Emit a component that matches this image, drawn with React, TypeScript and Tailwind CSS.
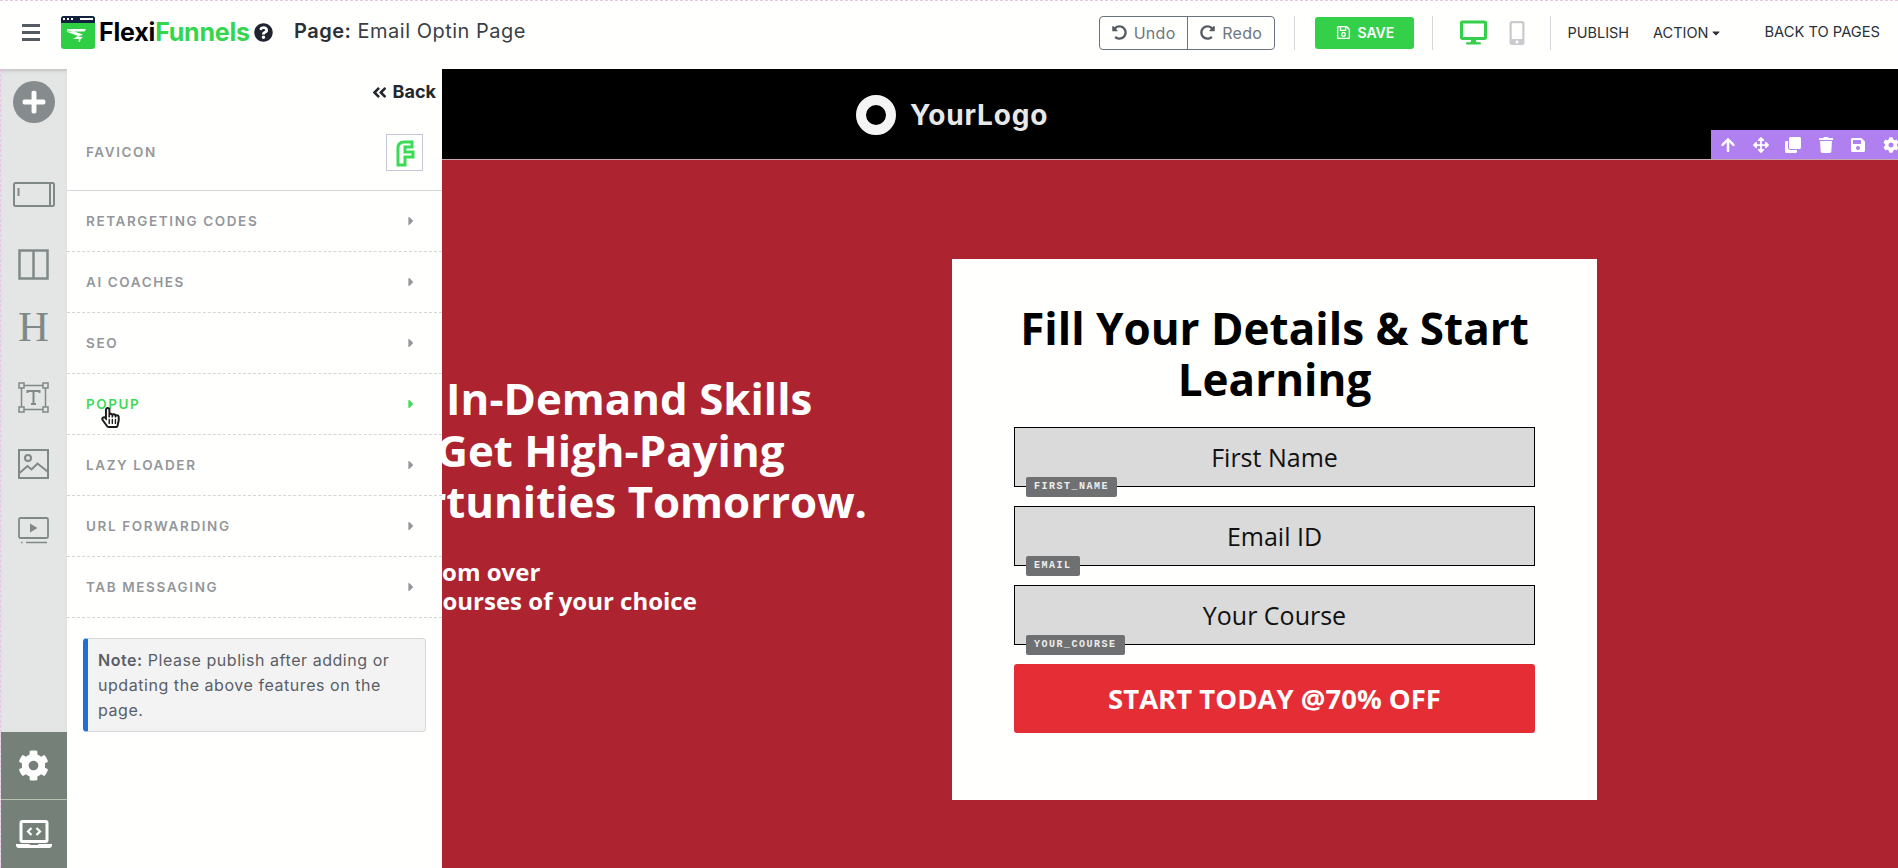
import {
  FaAngleDoubleLeft,
  FaArrowUp,
  FaArrowsAlt,
  FaCaretDown,
  FaCaretRight,
  FaClone,
  FaCog,
  FaDesktop,
  FaMobileAlt,
  FaPlus,
  FaQuestionCircle,
  FaRedoAlt,
  FaRegHandPointer,
  FaRegSave,
  FaSave,
  FaTrash,
  FaUndoAlt,
} from "react-icons/fa";

const poppins = "font-['Inter','Liberation_Sans',sans-serif]";
const openSans = "font-['Open_Sans','Liberation_Sans',sans-serif]";

const menuItems = [
  "RETARGETING CODES",
  "AI COACHES",
  "SEO",
  "POPUP",
  "LAZY LOADER",
  "URL FORWARDING",
  "TAB MESSAGING",
];

const fields = [
  { placeholder: "First Name", tag: "FIRST_NAME" },
  { placeholder: "Email ID", tag: "EMAIL" },
  { placeholder: "Your Course", tag: "YOUR_COURSE" },
];

function FlexiLogo() {
  return (
    <svg viewBox="0 0 34 33" className="h-[33px] w-[34px] shrink-0">
      <rect x="0" y="0" width="34" height="33" rx="3" fill="#2fcf45" />
      <path d="M0 3a3 3 0 0 1 3-3h28a3 3 0 0 1 3 3v4H0z" fill="#13213f" />
      <rect x="2" y="2" width="2" height="2" fill="#fff" />
      <rect x="6" y="2" width="2" height="2" fill="#fff" />
      <rect x="10" y="2" width="2" height="2" fill="#fff" />
      <rect x="19" y="2" width="13" height="2" fill="#fff" />
      <path
        d="M6 13h19l-1.500 2.500H13l9 3-5 2.500h5l-2.500 2-.5 3h-1.500l.5-3h-6l5-3-12-4.500h8l-7-1z"
        fill="#fff"
      />
    </svg>
  );
}

function SectionIcon() {
  return (
    <svg viewBox="0 0 42 25" className="h-[25px] w-[42px]" fill="none" stroke="#7f8a88" strokeWidth="2">
      <rect x="1" y="1" width="40" height="23" rx="1.500" />
      <path d="M5.500 6v8M37 1v23" />
    </svg>
  );
}

function ColumnsIcon() {
  return (
    <svg viewBox="0 0 31 31" className="h-[31px] w-[31px]" fill="none" stroke="#7f8a88" strokeWidth="2.500">
      <rect x="1.500" y="1.500" width="28" height="28" />
      <path d="M15.500 1.500v28" />
    </svg>
  );
}

function TextBoxIcon() {
  return (
    <svg viewBox="0 0 31 31" className="h-[31px] w-[31px]" fill="none" stroke="#7f8a88" strokeWidth="1.500">
      <rect x="3.500" y="3.500" width="24" height="24" />
      <rect x="1" y="1" width="5" height="5" fill="#e4e5e5" />
      <rect x="25" y="1" width="5" height="5" fill="#e4e5e5" />
      <rect x="1" y="25" width="5" height="5" fill="#e4e5e5" />
      <rect x="25" y="25" width="5" height="5" fill="#e4e5e5" />
      <path d="M9.500 11V9h12v2M15.500 9v13M13 22h5" strokeWidth="2" />
    </svg>
  );
}

function ImageIcon() {
  return (
    <svg viewBox="0 0 31 30" className="h-[30px] w-[31px]" fill="none" stroke="#7f8a88" strokeWidth="2">
      <rect x="1" y="1" width="29" height="28" />
      <circle cx="10" cy="9" r="3" />
      <path d="M1.500 24l8-7 4 3.500 6-6 10 8" />
    </svg>
  );
}

function VideoIcon() {
  return (
    <svg viewBox="0 0 31 27" className="h-[27px] w-[31px]" fill="none" stroke="#7f8a88" strokeWidth="1.800">
      <rect x="1" y="1" width="29" height="20" rx="1.500" />
      <path d="M12 6.500l7.500 4.500-7.500 4.500z" fill="#7f8a88" stroke="none" />
      <path d="M3 25.500h1.500M8 25.500h21" strokeWidth="1.500" />
    </svg>
  );
}

function LaptopCodeIcon() {
  return (
    <svg viewBox="0 0 36 28" className="h-[28px] w-[36px]" fill="none">
      <rect x="5" y="1.500" width="26" height="20" rx="1.500" stroke="#fff" strokeWidth="3" />
      <path d="M15.500 8l-3.500 3.500 3.500 3.500M20.500 8l3.500 3.500-3.500 3.500" stroke="#fff" strokeWidth="2.200" />
      <path d="M0 24h13l1.500 1h7l1.500-1h13v1a3 3 0 0 1-3 3H3a3 3 0 0 1-3-3z" fill="#fff" />
    </svg>
  );
}

function TopBar() {
  return (
    <header className="flex h-[69px] shrink-0 items-center border-t border-dashed border-[#e7c6e4] bg-[#fffffd] pb-[5px] text-[#2b3038]">
      <div className="ml-[22px] flex w-[18px] flex-col gap-[4px]">
        <span className="h-[3px] bg-[#555b63]" />
        <span className="h-[3px] bg-[#555b63]" />
        <span className="h-[3px] bg-[#555b63]" />
      </div>
      <div className="ml-[21px]">
        <FlexiLogo />
      </div>
      <span className={`ml-[4px] w-[150px] text-[25px] leading-none font-bold tracking-[-0.2px] ${poppins}`}>
        <span className="text-black">Flexi</span>
        <span className="text-[#35d64d]">Funnels</span>
      </span>
      <FaQuestionCircle className="ml-[5px] text-[19px] text-[#1f2430]" />
      <span className={`-mt-[3px] ml-[21px] text-[20px] tracking-[0.500px] ${poppins}`}>
        <span className="font-semibold">Page:</span> <span className="text-[#3a3f47]">Email Optin Page</span>
      </span>

      <div className={`ml-auto flex h-[34px] w-[176px] rounded-[4px] border border-[#6b7280] text-[16px] tracking-[0.300px] text-[#6f757d] ${poppins}`}>
        <span className="flex flex-1 items-center justify-center gap-[7px] border-r border-[#6b7280]">
          <FaUndoAlt className="text-[15px] text-[#555b63]" /> Undo
        </span>
        <span className="flex flex-1 items-center justify-center gap-[7px]">
          <FaRedoAlt className="text-[15px] text-[#555b63]" /> Redo
        </span>
      </div>
      <span className="ml-[19px] h-[34px] w-px bg-[#d5d7da]" />
      <button className={`ml-[20px] flex h-[32px] w-[99px] items-center justify-center gap-[7px] rounded-[3px] bg-[#35d04a] text-[14px] font-semibold text-white ${poppins}`}>
        <FaRegSave className="text-[15px]" /> SAVE
      </button>
      <span className="ml-[18px] h-[34px] w-px bg-[#d5d7da]" />
      <FaDesktop className="ml-[27px] text-[27px] text-[#35cf4b]" />
      <FaMobileAlt className="ml-[18px] text-[24px] text-[#c9cbce]" />
      <span className="ml-[21px] h-[34px] w-px bg-[#d5d7da]" />
      <span className={`ml-[16px] text-[14.500px] ${poppins}`}>PUBLISH</span>
      <span className={`ml-[24px] flex items-center gap-[2px] text-[14.500px] ${poppins}`}>
        ACTION <FaCaretDown className="text-[12px]" />
      </span>
      <span className={`mr-[18px] ml-[42px] text-[14.700px] ${poppins}`}>BACK TO PAGES</span>
    </header>
  );
}

function IconRail() {
  return (
    <aside className="flex w-[67px] shrink-0 flex-col items-stretch border-l border-dashed border-[#e7c6e4] bg-[#e4e5e5] shadow-[inset_0_4px_4px_-3px_#b5b5b5]">
      <div className="mt-[12px] flex flex-col items-center pr-[1px]">
        <span className="flex h-[42px] w-[42px] items-center justify-center rounded-full bg-[#868b8d]">
          <FaPlus className="text-[26px] text-white" />
        </span>
        <div className="mt-[59px]">
          <SectionIcon />
        </div>
        <div className="mt-[42px]">
          <ColumnsIcon />
        </div>
        <span className="mt-[32px] h-[30px] font-['Liberation_Serif',serif] text-[43px] leading-[30px] text-[#7f8a88]">H</span>
        <div className="mt-[40px]">
          <TextBoxIcon />
        </div>
        <div className="mt-[36px]">
          <ImageIcon />
        </div>
        <div className="mt-[38px]">
          <VideoIcon />
        </div>
      </div>
      <div className="relative mt-auto flex h-[68px] items-center justify-center border-b border-[#b9c2ad] bg-[#758079] pr-[1px]">
        <FaCog className="text-[31px] text-white" />
        <span className="absolute top-[22px] left-[66px] h-0 w-0 border-y-[13px] border-l-[14px] border-y-transparent border-l-[#758079]" />
      </div>
      <div className="flex h-[68px] items-center justify-center bg-[#758079] pr-[1px]">
        <LaptopCodeIcon />
      </div>
    </aside>
  );
}

function SettingsPanel() {
  return (
    <aside className={`relative z-10 flex w-[375px] shrink-0 flex-col bg-[#fffffd] ${poppins}`}>
      <div className="flex h-[46px] items-start justify-end pt-[9px] pr-[6px] text-[18px] font-bold text-[#24272c]">
        <span className="flex items-center gap-[5px] leading-[28px]">
          <FaAngleDoubleLeft className="text-[17px]" /> Back
        </span>
      </div>
      <div className="flex h-[76px] items-center justify-between border-b border-[#d4d6da] pr-[19px] pl-[19px]">
        <span className="text-[13.500px] font-semibold tracking-[1.600px] text-[#93979c]">FAVICON</span>
        <span className="flex h-[37px] w-[37px] items-center justify-center border border-[#c5c8d8]">
          <svg viewBox="0 0 20 28" className="h-[28px] w-[20px]" fill="none" stroke="#3bdc55" strokeWidth="3">
            <path d="M3 26V9q0-6 6-6h8v5h-7v5h8v5h-8v8z" />
          </svg>
        </span>
      </div>
      {menuItems.map((item) => {
        const active = item === "POPUP";
        return (
          <div
            key={item}
            className={`flex h-[61px] items-center justify-between border-b border-dashed border-[#d4d6da] pr-[24px] pl-[19px] text-[13.500px] font-semibold tracking-[1.600px] ${
              active ? "text-[#3ddb56]" : "text-[#93979c]"
            }`}
          >
            <span>{item}</span>
            <FaCaretRight className="text-[14px]" />
          </div>
        );
      })}
      <div className="mx-[16px] mt-[20px] rounded-[4px] border border-l-[5px] border-[#d6d8da] border-l-[#1f6fd6] bg-[#f3f3f3] pt-[9px] pr-[8px] pb-[8px] pl-[10px] text-[16px] leading-[25px] tracking-[0.550px] text-[#5a5e66]">
        <span className="font-semibold">Note:</span> Please publish after adding or updating the above features on the page.
      </div>
      <FaRegHandPointer className="absolute top-[338px] left-[33px] text-[21px] text-[#1b1b1b]" />
    </aside>
  );
}

function OptinCard() {
  return (
    <div className="flex h-[541px] w-[645px] shrink-0 flex-col items-center bg-[#fffffd] pt-[44px]">
      <h2 className={`w-[560px] text-center text-[44px] leading-[51px] font-bold text-black ${openSans}`}>
        Fill Your Details &amp; Start Learning
      </h2>
      <div className="mt-[22px] flex w-[521px] flex-col gap-[19px]">
        {fields.map((field) => (
          <div
            key={field.tag}
            className={`relative flex h-[60px] items-center justify-center border border-black bg-[#dadada] pt-[2px] text-[25px] text-[#111] ${openSans}`}
          >
            {field.placeholder}
            <span className="absolute top-[49px] left-[11px] rounded-[2px] bg-[#6f7072] px-[8px] py-[3px] font-['Liberation_Mono',monospace] text-[10px] leading-[14px] font-bold tracking-[1.500px] text-[#eee]">
              {field.tag}
            </span>
          </div>
        ))}
        <button className={`flex h-[69px] items-center justify-center rounded-[3px] bg-[#e52d36] text-[27.500px] font-bold text-white ${openSans}`}>
          START TODAY @70% OFF
        </button>
      </div>
    </div>
  );
}

export default function App() {
  return (
    <div className="flex h-[868px] w-[1898px] flex-col overflow-hidden bg-white">
      <TopBar />
      <div className="flex min-h-0 flex-1">
        <IconRail />
        <SettingsPanel />
        <main className="relative flex min-w-0 flex-1 flex-col overflow-hidden bg-black">
          <div className="flex h-[90px] shrink-0 items-center pt-[2px] pl-[414px]">
            <span className="h-[40px] w-[40px] rounded-full border-[10px] border-[#f4f4f4]" />
            <span className="ml-[14px] font-['Inter',sans-serif] text-[28px] font-bold tracking-[0.800px] text-[#e8e8e8]">YourLogo</span>
          </div>
          <section className="flex flex-1 border-t border-[#c9a6b0] bg-[#ad2430]">
            <div className={`-ml-[133px] w-[643px] shrink-0 pt-[213px] font-bold text-white ${openSans}`}>
              <h1 className="text-[43.800px] leading-[51.500px] whitespace-nowrap">
                Learn In-Demand Skills
                <br />
                <span className="ml-[7px]">Then Get High-Paying</span>
                <br />
                Opportunities Tomorrow.
              </h1>
              <p className="mt-[29px] ml-[60px] text-[24px] leading-[29px] whitespace-nowrap">
                <span className="-ml-[3px]">Pick from over</span>
                <br />
                100+ courses of your choice
              </p>
            </div>
            <div className="pt-[99px]">
              <OptinCard />
            </div>
          </section>
          <div className="absolute top-[61px] right-0 flex h-[29px] w-[187px] items-center justify-between bg-[#b07ff0] pl-[9px] text-[16px] text-white">
            <FaArrowUp />
            <FaArrowsAlt />
            <FaClone />
            <FaTrash />
            <FaSave />
            <FaCog className="-mr-[1px]" />
          </div>
        </main>
      </div>
    </div>
  );
}
